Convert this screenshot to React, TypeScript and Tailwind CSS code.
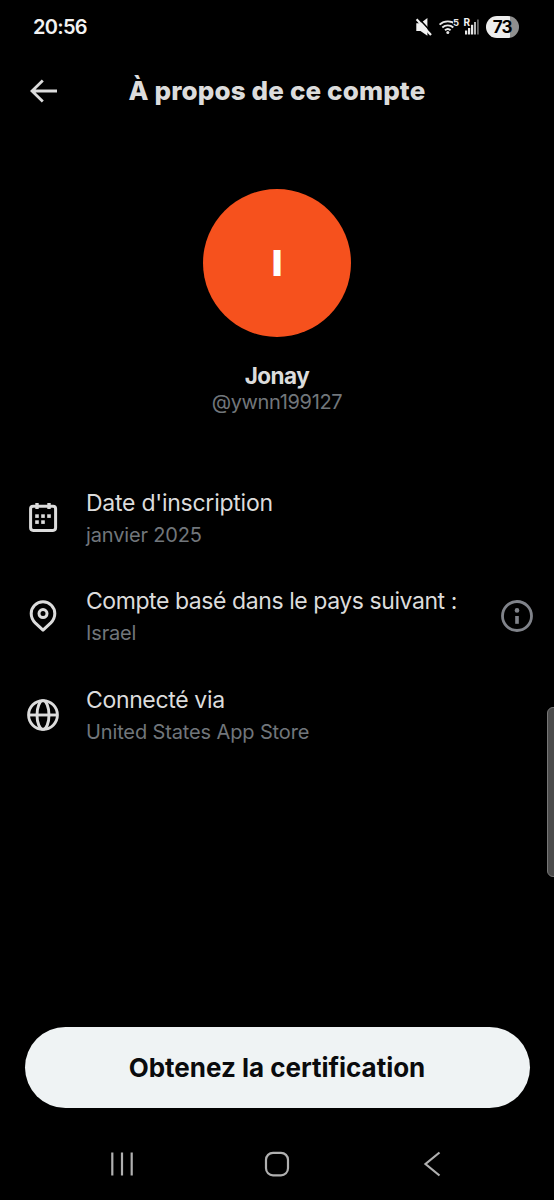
import type { ReactNode } from 'react';

function StatusBar() {
  return (
    <div className="flex h-[54px] items-center justify-between pl-[33px] pr-[35.5px]">
      <span className="text-[20px] leading-[24px] font-semibold tracking-[-0.7px] text-[#f2f2f2]">20:56</span>
      <div className="flex items-center">
        <svg width="70" height="30" viewBox="0 0 70 30" className="mr-[1px]">
          <path d="M1.3 11.2h4.2l6.9-5.2v17.8L5.5 19H1.3z" fill="#f2f2f2" />
          <path d="M3 5.4l14 15.4" stroke="#000" strokeWidth="1.5" />
          <path d="M1.6 7.2L16 22.9" stroke="#f2f2f2" strokeWidth="2.2" />
          <g fill="none" stroke="#e8e8e8" strokeWidth="1.9">
            <path d="M24.6 12.6c4.6-4.3 11.8-4.3 16.4 0" />
            <path d="M27.3 15.5c3.1-2.9 7.9-2.9 11 0" />
            <path d="M30 18.3c1.6-1.5 4-1.5 5.6 0" />
          </g>
          <circle cx="32.8" cy="20.5" r="1.5" fill="#e8e8e8" />
          <rect x="38" y="6" width="6" height="7.5" fill="#000" />
          <text x="38" y="13.8" fontSize="9.5" fontWeight="700" fill="#e8e8e8">5</text>
          <text x="48.5" y="14.2" fontSize="10" fontWeight="700" fill="#f2f2f2">R</text>
          <g fill="#e8e8e8">
            <rect x="50" y="18.5" width="2.2" height="4" />
            <rect x="53" y="16" width="2.2" height="6.5" />
            <rect x="56" y="12.8" width="2.2" height="9.7" />
          </g>
          <rect x="59" y="10" width="2" height="12.5" fill="#b5b5b5" />
          <rect x="62" y="7.5" width="1.8" height="15" fill="#666" />
        </svg>
        <div className="flex h-[22px] w-[32.5px] items-center justify-center overflow-hidden rounded-full bg-linear-to-r from-[#ededed] from-73% to-[#8f8f8f] to-73%">
          <span className="text-[17px] leading-[22px] font-bold tracking-[-0.7px] text-black">73</span>
        </div>
      </div>
    </div>
  );
}

function InfoRow({ icon, title, value, titleClass, valueClass, action }: {
  icon: ReactNode; title: string; value: string; titleClass: string; valueClass: string; action?: ReactNode;
}) {
  return (
    <div className="flex h-[98.5px] items-center pl-[25px] pr-[19px]">
      <div className="w-[61px] shrink-0">{icon}</div>
      <div className="grow pt-[2px] whitespace-nowrap">
        <div className={`text-[23px] leading-[32px] text-[#dcdcdc] ${titleClass}`}>{title}</div>
        <div className={`text-[20px] leading-[32px] text-[#71767b] ${valueClass}`}>{value}</div>
      </div>
      {action}
    </div>
  );
}

const CalendarIcon = () => (
  <svg width="36" height="36" viewBox="0 0 36 36" fill="none" stroke="#dcdcdc">
    <rect x="5.6" y="6.2" width="25" height="24.2" rx="2.6" strokeWidth="3" />
    <path d="M12 3v6M24 3v6" strokeWidth="3.4" />
    <g fill="#dcdcdc" stroke="none">
      <rect x="10.2" y="14.3" width="3.6" height="3.6" /><rect x="16.2" y="14.3" width="3.6" height="3.6" /><rect x="22.2" y="14.3" width="3.6" height="3.6" />
      <rect x="10.2" y="20.3" width="3.6" height="3.6" /><rect x="16.2" y="20.3" width="3.6" height="3.6" />
    </g>
  </svg>
);

const PinIcon = () => (
  <svg width="36" height="36" viewBox="0 0 36 36" fill="none" stroke="#dcdcdc" strokeWidth="3" strokeLinejoin="round">
    <path d="M18 32.1l-7.8-7.2C7.7 22.4 6.2 19.2 6.2 15.6a11.8 11.8 0 0 1 23.6 0c0 3.6-1.5 6.8-4 9.3z" />
    <circle cx="18" cy="15.6" r="4" />
  </svg>
);

const GlobeIcon = () => (
  <svg width="36" height="36" viewBox="0 0 36 36" fill="none" stroke="#dcdcdc" strokeWidth="2.9">
    <circle cx="18" cy="18" r="14.4" />
    <ellipse cx="18" cy="18" rx="6" ry="14.4" />
    <path d="M3.6 18h28.8" />
  </svg>
);

const InfoIcon = () => (
  <svg width="36" height="36" viewBox="0 0 36 36" className="shrink-0">
    <circle cx="18" cy="18" r="14.5" fill="none" stroke="#80838a" strokeWidth="2.8" />
    <circle cx="18" cy="12.4" r="2.3" fill="#80838a" />
    <rect x="16.2" y="18" width="3.6" height="7.8" fill="#80838a" />
  </svg>
);

export default function App() {
  return (
    <div className="relative flex h-[1200px] w-[554px] flex-col overflow-hidden bg-black font-['Inter','Liberation_Sans',sans-serif]">
      <StatusBar />
      <header className="grid h-[74px] grid-cols-[120px_1fr_120px] items-center">
        <svg width="28" height="24" viewBox="0 0 28 24" fill="none" stroke="#dcdcdc" strokeWidth="2.8" className="ml-[30px]">
          <path d="M27 12H2M12.8 1.5L2 12l10.8 10.5" />
        </svg>
        <h1 className="text-center text-[26px] leading-[32px] font-extrabold whitespace-nowrap tracking-[0.13px] text-[#dcdcdc]">À propos de ce compte</h1>
      </header>
      <section className="flex flex-col items-center pt-[61px]">
        <div className="flex h-[148px] w-[148px] items-center justify-center rounded-full bg-[#f6511d]">
          <span className="text-[35px] leading-[40px] font-black text-white">I</span>
        </div>
        <div className="mt-[25px] text-[22.5px] leading-[27px] font-bold tracking-[-0.5px] text-[#dcdcdc]">Jonay</div>
        <div className="text-[20px] leading-[26px] tracking-[-0.35px] text-[#71767b]">@ywnn199127</div>
      </section>
      <main className="flex grow flex-col pt-[53.5px]">
        <InfoRow icon={<CalendarIcon />} title="Date d'inscription" value="janvier 2025" titleClass="tracking-[-0.25px]" valueClass="tracking-[-0.15px]" />
        <InfoRow icon={<PinIcon />} title="Compte basé dans le pays suivant :" value="Israel" titleClass="tracking-[-0.43px]" valueClass="tracking-[-0.15px]" action={<InfoIcon />} />
        <InfoRow icon={<GlobeIcon />} title="Connecté via" value="United States App Store" titleClass="tracking-[-0.35px]" valueClass="tracking-[-0.13px]" />
      </main>
      <button className="mx-[24.5px] h-[80.5px] shrink-0 rounded-full bg-[#eff3f4] pt-[1.5px] text-[26px] leading-[32px] font-bold tracking-[-0.02px] text-[#0a0b0d]">
        Obtenez la certification
      </button>
      <nav className="grid h-[92.5px] shrink-0 grid-cols-3 items-center justify-items-center px-[44px] pt-[20px]">
        <svg width="24" height="26" viewBox="0 0 24 26" stroke="#b0b0b0" strokeWidth="2.2"><path d="M2.3 1.5v23M12 1.5v23M21.7 1.5v23" /></svg>
        <svg width="26" height="26" viewBox="0 0 26 26" fill="none" stroke="#b0b0b0" strokeWidth="2.2"><rect x="2" y="1.8" width="22" height="22.5" rx="7" /></svg>
        <svg width="18" height="26" viewBox="0 0 18 26" fill="none" stroke="#b0b0b0" strokeWidth="2.2"><path d="M16.5 1.5L2.5 13l14 11.5" /></svg>
      </nav>
      <div className="absolute top-[707px] right-[-8px] h-[170px] w-[15px] rounded-[6px] border border-[#777] bg-[#4b4b4b]" />
    </div>
  );
}
